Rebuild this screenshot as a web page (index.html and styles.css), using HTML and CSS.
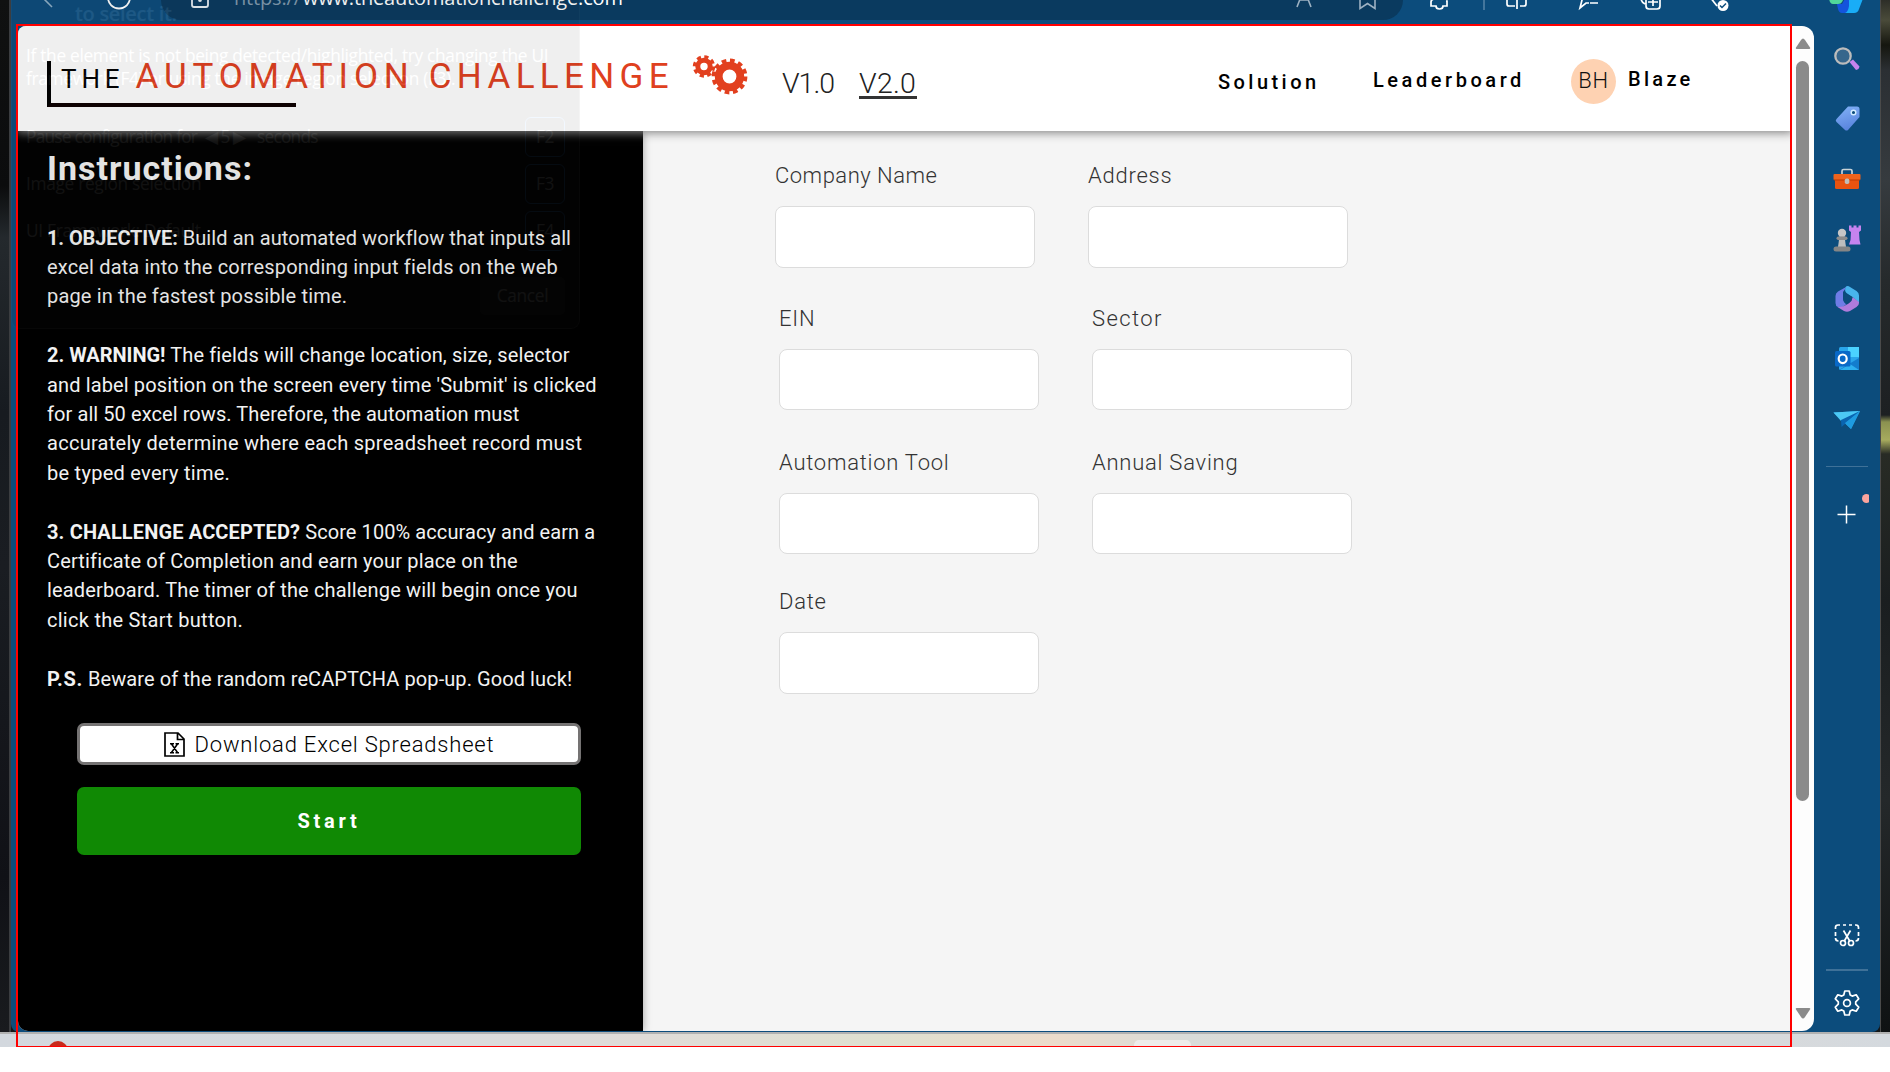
FILE: index.html
```html
<!DOCTYPE html>
<html lang="en">
<head>
<meta charset="utf-8">
<title>The Automation Challenge</title>
<link rel="stylesheet" href="styles.css">
</head>
<body>
<div class="desktop">
  <div class="wall-left"></div>
  <div class="window">
    <div class="toolbar">
      <svg class="nav-icons" width="150" height="25" viewBox="0 0 150 25" fill="none">
        <path d="M41 7l-8-8" stroke="#8fb0c8" stroke-width="1.6"/>
        <circle cx="108" cy="-2.500" r="11" stroke="#fff" stroke-width="1.800"/>
      </svg>
      <div class="address">
        <svg class="lock" width="20" height="20" viewBox="0 0 20 20" fill="none" stroke="#e8eff5" stroke-width="1.800"><path d="M2-6V5q0 2 2 2h12q2 0 2-2V-6"/><circle cx="10" cy="0" r="1" fill="#fff"/></svg>
        <span class="url"><span class="scheme">https://</span>www.theautomationchallenge.com</span>
        <svg class="addr-icons" width="90" height="20" viewBox="0 0 90 20" fill="none" stroke="#9db1c2" stroke-width="1.600"><path d="M7 7L12-6l4 0L21 7M10 0h9"/><path d="M70-8V8.500l7.500-5 7.500 5V-8"/></svg>
      </div>
      <svg class="tools" width="340" height="25" viewBox="0 0 340 25" fill="none" stroke="#fff" stroke-width="1.700">
        <path d="M32-4v3q-4 0-4 3v4h5q0 3 3.500 3t3.500-3h4V1h-1"/>
        <path d="M81-4v14" stroke="#5d89ab" stroke-width="1.400"/>
        <path d="M104-4v8q0 2 2 2h6M114-4v13M117 6h4q2 0 2-2v-8"/>
        <path d="M163-4l-3 12 6-5h3M170 3h8" transform="translate(17)"/>
        <path d="M243-4V6q0 3 3 3h8q3 0 3-3v-10M250-4V6M245 2h10M238-2q0 4 4 6"/>
        <path d="M307-3l7 9"/><circle cx="320" cy="5.500" r="5.500" fill="#fff" stroke="none"/><path d="M317 5.500l2 2 4-4" stroke="#0c4c7c" stroke-width="1.500"/>
      </svg>
      <svg class="copilot" width="42" height="25" viewBox="0 0 42 25"><path d="M3-4h16l-3 6q-1 2-4 2H7Q3 4 3-4z" fill="#52d69a"/><path d="M11 4h5l4-7h12l-5 12q-1 4-5 4h-6q-3 0-4-4z" fill="#1454dc"/><path d="M23-4h15l-5 13q-1 4-5 4h-9q3-1 4-7z" fill="#19adf7"/></svg>
    </div>
    <div class="content">
      <div class="page">
        <header class="site-header">
          <div class="logo"><div class="bracket"><span class="the">THE</span><span class="brand"><span class="word">AUTOMATION</span> CHALLENGE</span></div></div>
          <svg class="gears" width="56" height="46" viewBox="0 0 56 46" fill="none" stroke="#e2401f">
            <circle cx="12" cy="15.500" r="6.200" stroke-width="5"/><circle cx="12" cy="15.500" r="9.600" stroke-width="3.200" stroke-dasharray="4.200 3.340"/>
            <circle cx="37.500" cy="25.500" r="10.800" stroke-width="7.800"/><circle cx="37.500" cy="25.500" r="15.700" stroke-width="4.400" stroke-dasharray="4.600 3.620"/>
          </svg>
          <a class="version v1">V1.0</a>
          <a class="version v2">V2.0</a>
          <a class="menu solution">Solution</a>
          <a class="menu leader">Leaderboard</a>
          <span class="avatar">BH</span>
          <span class="menu user">Blaze</span>
        </header>
        <div class="main">
          <aside class="panel">
            <h1>Instructions:</h1>
            <p class="p1"><span class="tight"><b>1. OBJECTIVE:</b> Build an automated workflow that inputs all</span><br>excel data into the corresponding input fields on the web<br>page in the fastest possible time.</p>
            <p class="p2"><b>2. WARNING!</b> The fields will change location, size, selector<br>and label position on the screen every time 'Submit' is clicked<br><span class="tight">for all 50 excel rows. Therefore, the automation must</span><br><span class="wide">accurately determine where each spreadsheet record must</span><br><span class="wide">be typed every time.</span></p>
            <p class="p3"><span class="tight"><b>3. CHALLENGE ACCEPTED?</b> Score 100% accuracy and earn a</span><br>Certificate of Completion and earn your place on the<br>leaderboard. The timer of the challenge will begin once you<br><span class="wide">click the Start button.</span></p>
            <p class="p4"><b>P.S.</b> Beware of the random reCAPTCHA pop-up. Good luck!</p>
            <div class="download">
              <svg width="21" height="25" viewBox="0 0 21 25" fill="none" stroke="#000" stroke-width="1.700"><path d="M1 1h13l6 6v17H1zM13.500 1v6.500H20"/><path d="M7.500 12l6 8.500M13.500 12l-6 8.500M6 11.800h4M11.500 11.800H15M6 20.700h4M11.500 20.700H15" stroke-width="1.500"/></svg>
              <span>Download Excel Spreadsheet</span>
            </div>
            <div class="start">Start</div>
          </aside>
          <form class="form">
            <div class="row r1"><label>Company Name<input></label><label class="ls-addr">Address<input></label></div>
            <div class="row r2"><label>EIN<input></label><label class="ls-sector">Sector<input></label></div>
            <div class="row r3"><label>Automation Tool<input></label><label>Annual Saving<input></label></div>
            <div class="row r4"><label>Date<input></label></div>
          </form>
        </div>
      </div>
      <div class="scrollbar">
        <svg width="16" height="14" viewBox="0 0 16 14"><path d="M8 1.500q1 0 2 1.500l5 7.500q.8 1.500-.8 1.500H1.800Q.2 12 1 10.500L6 3q1-1.500 2-1.500z" fill="#8b8b8b"/></svg>
        <div class="thumb"></div>
        <svg class="down" width="16" height="14" viewBox="0 0 16 14"><path d="M8 12.500q-1 0-2-1.500L1 3.500Q.2 2 1.800 2h12.400q1.600 0 .8 1.500L10 11q-1 1.500-2 1.500z" fill="#8b8b8b"/></svg>
      </div>
      <nav class="sidebar">
        <svg viewBox="0 0 28 28"><path d="M16.500 18l3.500-2.500 6.500 7q-.5 3-3.500 3.500z" fill="#c583ee"/><circle cx="10" cy="12" r="7.700" fill="#36668c" stroke="#bcbcbc" stroke-width="2.300"/></svg>
        <svg viewBox="0 0 28 28"><defs><linearGradient id="tag" x2=".3" y2="1"><stop stop-color="#83b2f8"/><stop offset="1" stop-color="#5a85de"/></linearGradient></defs><path d="M15 2.500h9q2.500 0 2.500 2.500v8L15 26q-1.500 1-3 0l-8.500-8q-1.500-1.500 0-3z" fill="url(#tag)"/><circle cx="20.500" cy="8.500" r="2.300" fill="#0c4c7c" stroke="#d5ecff" stroke-width="1.500"/></svg>
        <svg viewBox="0 0 28 28"><path d="M9 9V6q0-1.500 1.500-1.500h7Q19 4.500 19 6v3" fill="none" stroke="#c9d2d6" stroke-width="1.700"/><rect x="2" y="13" width="24" height="11" rx="1.500" fill="#e85310"/><rect x=".5" y="9" width="27" height="6" rx="1" fill="#ee631c"/><path d="M1 15h26" stroke="#b93b05"/><rect x="11.800" y="13.500" width="4.500" height="5.500" rx="1.800" fill="#c0bdb9"/></svg>
        <svg viewBox="0 0 28 28"><path d="M16 .5h2.500v2h2v-2h3v2h2v-2H28v5l-2 1.500.5 8 1 4.500H16l1.500-4.500.5-8-2-1.500z" fill="#c583ee"/><circle cx="9" cy="8" r="4.200" fill="#c6c6c6"/><path d="M6.500 11h5l1.500 11H5z" fill="#bdbdbd"/><rect x="3.500" y="11.500" width="11" height="3.500" rx="1.700" fill="#8c8c8c"/><rect x=".5" y="21.500" width="17" height="5" rx="2.500" fill="#858585"/></svg>
        <svg viewBox="0 0 28 28"><path d="M14 1.500L5 6.500Q2.500 8 2.500 11v7q0 3 2.500 4l3.500 1 5-4q-3.500-2-3.500-5V7z" fill="#6f7ce6"/><path d="M13 1.500q2-1 4 .5l6.500 4q2.500 1.500 2.500 4.500v7l-6-5-6.500-4.500Q11 6 13 1.500z" fill="#48b4ec"/><path d="M19.500 12l6.500 5v1q0 2.500-2.500 4L17 26q-3 1.500-6 0l-6.500-4q5 .5 8.500-2 6-3 6.500-8z" fill="#b07bdc"/><path d="M12.500 8.500q1 0 7 3.500l-1 4-5.500 3q-2.500-2-2.500-5t2-5.500z" fill="#0c4c7c"/></svg>
        <svg viewBox="0 0 28 28"><rect x="6" y="2" width="20" height="23" rx="1.500" fill="#2aa5ea"/><path d="M15 2h11v10H15z" fill="#4bd2ff"/><path d="M6 25l20-12v12z" fill="#137dcd"/><path d="M7 25l10-6 9 6z" fill="#2db0ef"/><rect x="2" y="6" width="15.500" height="15.500" rx="1.500" fill="#0969c8"/><ellipse cx="9.700" cy="13.800" rx="4" ry="4.300" fill="none" stroke="#fff" stroke-width="2.200"/></svg>
        <svg viewBox="0 0 28 28"><path d="M.5 6.500L27 5 18 23z" fill="#2aa7e8"/><path d="M.5 6.500L27 5 8 15z" fill="#4cc9f5"/><path d="M8 14l19-9-15 13-3.500 3z" fill="#0a64b0"/><path d="M12 17L27 5l-9 18z" fill="#1e9be0"/></svg>
        <div class="rule"></div>
        <svg class="plus" viewBox="0 0 44 44" fill="none"><path d="M12.500 28.500h18M21.500 19.500v18" stroke="#fff" stroke-width="1.500"/><circle cx="41.500" cy="12.500" r="4.500" fill="#fba49d"/></svg>
        <svg class="snip" viewBox="0 0 28 28" fill="none" stroke="#fff" stroke-width="1.700"><path d="M2.500 7V5.500Q2.500 3 5 3h2M10 3h3M16 3h3M22 3h1q2.500 0 2.500 2.500V7M2.500 10v4M25.500 10v4M2.500 16q0 3 3 3M25.500 16q0 3-3 3"/><path d="M10.500 8.500l6.500 11M17.500 8.500l-6.500 11"/><circle cx="10" cy="21" r="2.500"/><circle cx="18" cy="21" r="2.500"/></svg>
        <div class="rule low"></div>
        <svg class="cog" viewBox="0 0 28 28" fill="none" stroke="#fff" stroke-width="1.700" stroke-linejoin="round"><path d="M11.800 2h4.400l1 4 2 1.100 4-1.300 2.500 4-3 3v2.400l3 3-2.500 4-4-1.300-2 1.100-1 4h-4.400l-1-4-2-1.100-4 1.300-2.500-4 3-3v-2.400l-3-3 2.500-4 4 1.300 2-1.100z"/><circle cx="14" cy="14" r="3.400"/></svg>
      </nav>
    </div>
  </div>
  <div class="wall-right"></div>
</div>
<div class="taskbar"><span class="dot"></span><span class="tab"></span></div>

<div class="ghost">
  <div class="g-title">to select it.</div>
  <div class="g-help">If the element is not being detected/highlighted, try changing the UI<br>framework (F4) or using the image region selection (F3).</div>
  <div class="g-row"><span class="g-pause">Pause configuration for &nbsp;◀ 5 ▶ &nbsp;&nbsp;seconds</span><kbd>F2</kbd></div>
  <div class="g-row"><span>Image region selection</span><kbd>F3</kbd></div>
  <div class="g-row"><span>UI Framework: Default</span><kbd>F4</kbd></div>
  <div class="g-cancel">Cancel</div>
</div>
<div class="frame"></div>
</body>
</html>
```
FILE: styles.css
```css
* { box-sizing: border-box; }
body { margin: 0; width: 1890px; height: 1072px; position: relative; overflow: hidden; background: #fff; font-family: Roboto, "Liberation Sans", sans-serif; }
svg { display: block; flex: none; }

.desktop { display: flex; height: 1034px; border-bottom: 2px solid #b1b1b1; background: #141719; }
.wall-left { width: 11px; border-right: 2px solid #3b3d40; background: linear-gradient(#101111, #0b0c0d 18%, #24292d 23%, #171b20 40%, #1a1d22 55%, #101116 85%, #191b1e); }
.wall-right { flex: 1; border-left: 1px solid #4a4a4a; background: linear-gradient(#2d2e28 0, #4a4b3a 20px, #15160f 45px, #2b2f33 70px, #363b3f 180px, #262a2c 280px, #1d2022 415px, #8b9150 422px, #a7ab5e 440px, #282b25 454px, #1a1e20 600px, #24282a 800px, #0f1213); }
.window { width: 1869px; display: flex; flex-direction: column; background: #0c4c7c; border-radius: 0 0 8px 8px; }

.toolbar { height: 26px; display: flex; }
.nav-icons { width: 150px; }
.address { width: 1242px; height: 20px; display: flex; background: #0a3a5f; border-radius: 0 0 22px 22px; overflow: hidden; }
.lock { margin-left: 29px; }
.url { margin: -14px 0 0 24px; width: 828px; font: 20px/24px "Open Sans", "Noto Sans", sans-serif; letter-spacing: -.17px; color: #fff; white-space: nowrap; }
.scheme { color: #7f99ae; margin-right: 2px; }
.addr-icons { margin-left: 228px; }
.tools { margin-left: 0; }
.copilot { margin-left: 83px; }

.content { display: flex; height: 1005px; }
.page { width: 1774px; margin-left: 7px; display: flex; flex-direction: column; border-radius: 8px 0 0 10px; overflow: hidden; background: #f5f5f5; }
.site-header { height: 105px; display: flex; align-items: flex-start; background: #fff; box-shadow: 0 1px 9px 1px #858585; position: relative; z-index: 1; line-height: 30px; white-space: nowrap; }
.logo { width: 645px; margin: 35px 0 0 29px; }
.bracket { width: 249px; height: 46px; border-left: 4px solid #000; border-bottom: 4px solid #0d0000; padding-left: 10px; display: flex; align-items: baseline; }
.the { font-size: 26px; letter-spacing: 4.9px; color: #000; width: 74.500px; flex: none; }
.brand { font-size: 35px; letter-spacing: 5.350px; color: #df4020; margin-top: 1px; }
.word { letter-spacing: 5.850px; }
.gears { margin-top: 25px; width: 56px; }
.version { font-size: 28.500px; font-weight: 300; color: #222; margin-top: 43px; }
.v1 { margin-left: 34px; width: 77px; letter-spacing: -1px; }
.v2 { width: 58px; height: 30px; border-bottom: 3px solid #333; letter-spacing: .3px; }
.menu { font-size: 20px; font-weight: 500; letter-spacing: 3.450px; color: #000; }
.solution { margin: 41px 0 0 301px; width: 155px; }
.leader { margin-top: 39px; width: 198px; letter-spacing: 3.550px; }
.avatar { width: 45px; height: 45px; margin-top: 33px; border-radius: 50%; background: #fed2b2; font-size: 22px; font-weight: 300; line-height: 43px; text-align: center; letter-spacing: .8px; color: #111; }
.user { margin: 38px 0 0 12px; letter-spacing: 3.300px; }

.main { flex: 1; display: flex; }
.panel { width: 625px; background: #000; color: #f2f2f2; padding: 17px 0 0 29px; box-shadow: 0 0 8px rgba(0, 0, 0, .35); white-space: nowrap; }
h1 { margin: 0 0 34.500px; font-size: 34px; line-height: 41px; letter-spacing: 1px; font-weight: 700; }
p { margin: 0 0 29.400px; font-size: 20px; line-height: 29.400px; }
.p1 { letter-spacing: .16px; }
.p2 { letter-spacing: .13px; }
.p3 { letter-spacing: .15px; }
.p4 { letter-spacing: .08px; }
.wide { letter-spacing: .27px; }
.tight { letter-spacing: .08px; }
.p1 b { letter-spacing: -.12px; }
.p2 b { letter-spacing: -.02px; }
.p3 b { letter-spacing: .14px; }
.p4 b { letter-spacing: .7px; }
.download { width: 504px; height: 42px; margin: 29px 0 22px 30px; border: 3px solid #757373; border-radius: 7px; background: #fff; color: #000; display: flex; align-items: center; justify-content: center; gap: 10px; font-size: 22px; font-weight: 300; letter-spacing: .8px; }
.start { width: 504px; height: 68px; margin-left: 30px; border-radius: 7px; background: #108904; color: #fff; font-size: 20px; font-weight: 700; letter-spacing: 3.700px; line-height: 69px; text-align: center; }

.form { padding: 30px 0 0 132px; color: #333; font-size: 22px; font-weight: 300; letter-spacing: .75px; line-height: 30px; }
.row { display: flex; gap: 53.500px; }
.row label { width: 259.500px; display: flex; flex-direction: column; gap: 15px; }
.row input { width: 259.500px; height: 62px; border: 1px solid #dcdcdc; border-radius: 8px; background: #fff; }
.r1, .r2 { margin-bottom: 36px; }
.r1 label:first-child { letter-spacing: .5px; }
.r2, .r3, .r4 { padding-left: 4px; }
.r2 { margin-bottom: 38px; }
.r3 { margin-bottom: 33px; }
.r2 input, .r3 input { height: 61px; }
.row .ls-sector { letter-spacing: 1.400px; }

.scrollbar { width: 22px; background: #fdfdfd; border-radius: 0 12px 12px 0; padding: 11px 0 0 3px; display: flex; flex-direction: column; }
.thumb { width: 13px; height: 740px; margin: 10px 0 205px 1px; border-radius: 7px; background: #8b8b8b; }

.sidebar { flex: 1; display: flex; flex-direction: column; align-items: center; padding-top: 18px; }
.sidebar svg { width: 28px; height: 28px; margin-bottom: 32.300px; }
.rule { width: 42px; height: 1px; background: #3f7198; margin-bottom: 19px; }
.sidebar .plus { width: 44px; height: 44px; margin-bottom: 391.500px; }
.sidebar .snip { margin-bottom: 19px; }
.rule.low { height: 2px; margin-bottom: 18px; }
.sidebar .cog { margin-bottom: 0; }

.taskbar { height: 13px; display: flex; overflow: hidden; background: linear-gradient(90deg, #d3d8de 0, #d8dcdf 400px, #e0dcd8 640px, #dfe0d0 880px, #ecdccb 1050px, #d9dcd9 1190px, #dedad6 1330px, #dddbd8 1550px, #d4d9de); }
.dot { width: 20px; height: 20px; margin: 7px 0 0 48px; border-radius: 50%; background: #c92a1c; flex: none; }
.tab { width: 57px; height: 20px; margin: 6px 0 0 1066px; border-radius: 5px; background: #eeecea; flex: none; }

/* Nearly faded-out helper dialog lying over the browser window */
.ghost { position: absolute; z-index: 2; left: 11px; top: 0; width: 569px; height: 329px; opacity: .065; background: #1d1d1d; border: 1px solid #666; border-top: 0; border-radius: 0 0 9px 9px; color: #fff; font: 17.300px/24px "Open Sans", "Noto Sans", sans-serif; letter-spacing: -.3px; padding-left: 14px; white-space: nowrap; }
.g-title { font-size: 20px; font-weight: 600; margin: 2px 0 18px 49px; }
.g-help { line-height: 23px; height: 69px; margin-top: 16px; }
.g-row { height: 47px; padding-right: 14px; display: flex; align-items: center; justify-content: space-between; }
.g-row kbd { width: 40px; height: 40px; border: 1.500px solid #4da3ff; border-radius: 6px; font: inherit; line-height: 38px; text-align: center; }
.g-pause { letter-spacing: -.75px; }
.g-cancel { width: 85px; height: 38px; margin: 23px 0 0 454px; border-radius: 5px; background: #444; text-align: center; line-height: 38px; }

.frame { position: absolute; z-index: 3; left: 16px; top: 24px; width: 1776px; height: 1023px; border: 2px solid #f00; border-bottom-width: 1px; }
```
